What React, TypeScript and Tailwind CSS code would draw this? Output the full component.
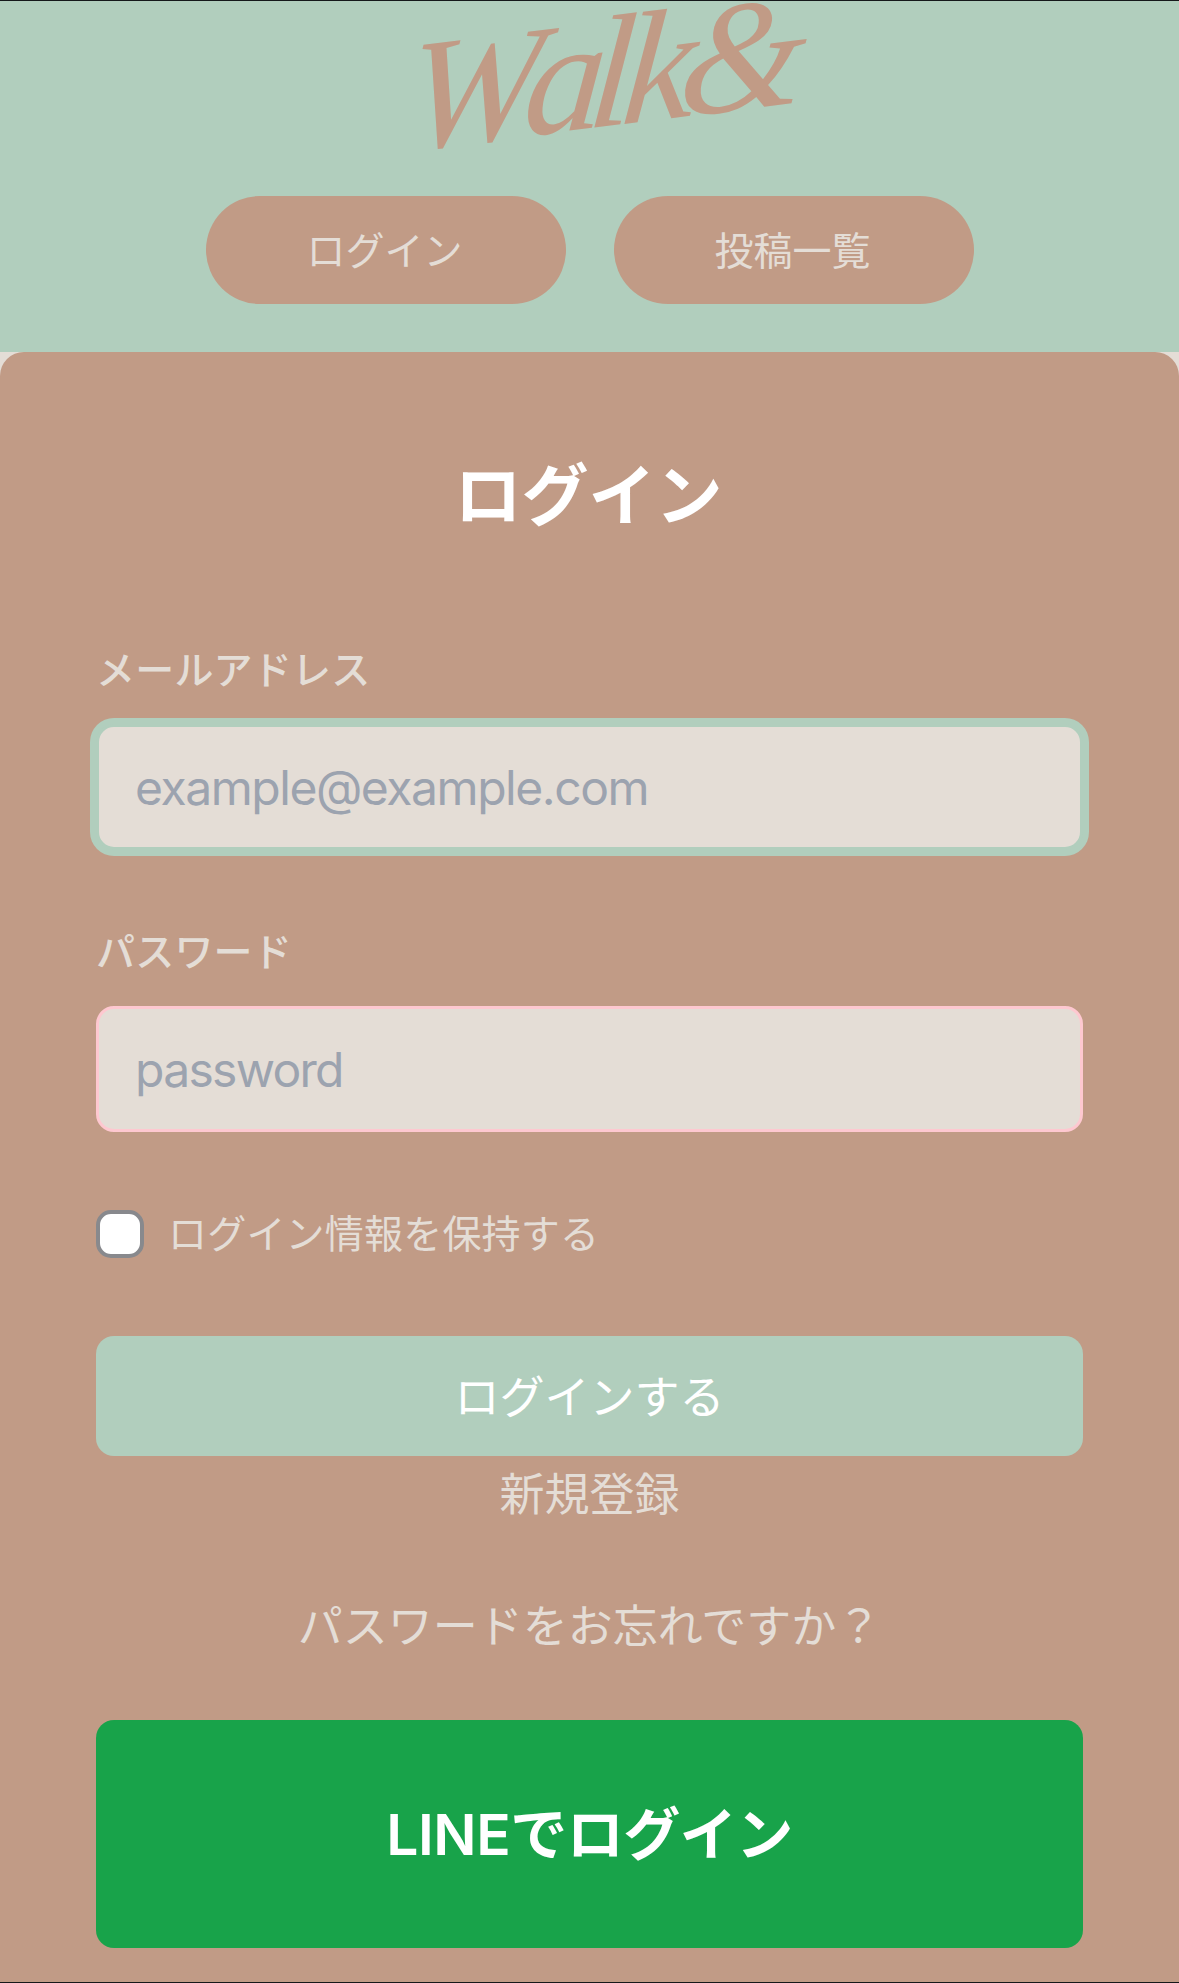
import React from "react";

function Logo() {
  return (
    <svg viewBox="0 0 400 170" className="h-[170px] w-[400px] overflow-visible" role="img" aria-label="Walk&amp;">
      <g
        transform="translate(1 150) rotate(-7) skewX(-12) scale(1.18 1.14)"
        fill="#c19b86"
        fontFamily="'Liberation Serif', serif"
        fontStyle="italic"
        fontSize="138"
      >
        <text x="0 101 156 185 233">Walk&amp;</text>
      </g>
    </svg>
  );
}

function NavButton({ children }: { children: React.ReactNode }) {
  return (
    <button className="h-[108px] w-[360px] rounded-full bg-[#c19b86] pr-0.5 text-[39px] leading-none text-[#e4ddd6]">
      {children}
    </button>
  );
}

export default function App() {
  return (
    <div className="flex h-[1983px] w-[1179px] flex-col border-y border-[#15181a] bg-[#e4ddd6] font-['Inter','Noto_Sans_CJK_JP',sans-serif]">
      <header className="flex h-[351px] shrink-0 flex-col items-center bg-[#b1cebd]">
        <div className="h-[195px] pl-6">
          <Logo />
        </div>
        <nav className="flex gap-12">
          <NavButton>ログイン</NavButton>
          <NavButton>投稿一覧</NavButton>
        </nav>
      </header>

      <main className="flex grow flex-col rounded-t-3xl bg-[#c19b86] px-24 text-[#e4ddd6]">
        <h1 className="mt-[102px] pr-0.5 text-center text-[67px] leading-[84px] font-bold text-white">ログイン</h1>

        <form className="flex flex-col">
          <label htmlFor="email" className="mt-[102px] text-[39px] leading-[60px] font-medium tracking-[0.2px]">メールアドレス</label>
          <input
            id="email"
            type="email"
            placeholder="example@example.com"
            className="mt-6 h-[126px] rounded-[18px] border-[3px] border-[#b1cebd] bg-[#e4ddd6] px-9 text-[48px] tracking-[-1.45px] ring-6 ring-[#b1cebd] outline-none placeholder:text-[#9ca3af]"
          />
          <label htmlFor="password" className="mt-[72px] text-[39px] leading-[60px] font-medium tracking-[0.2px]">パスワード</label>
          <input
            id="password"
            type="password"
            placeholder="password"
            className="mt-6 h-[126px] rounded-[18px] border-[3px] border-[#fec8d0] bg-[#e4ddd6] px-9 text-[48px] tracking-[-1.7px] outline-none placeholder:text-[#9ca3af]"
          />
          <label className="mt-[72px] flex h-[60px] items-center gap-6 text-[39px] leading-[60px] tracking-[0.2px]">
            <input type="checkbox" className="size-12 appearance-none rounded-[15px] border-4 border-[#88898d] bg-white" />
            ログイン情報を保持する
          </label>
          <button type="button" className="mt-[72px] h-[120px] rounded-[18px] bg-[#b1cebd] pt-0.5 text-[45px] leading-none text-white">
            ログインする
          </button>
        </form>

        <a className="mt-1.5 text-center text-[45px] leading-[66px]">新規登録</a>
        <a className="mt-[66px] text-center text-[45px] leading-[66px]">パスワードをお忘れですか？</a>

        <button className="mt-[60px] h-[228px] shrink-0 rounded-[18px] bg-[#18a34a] text-[57px] leading-none font-semibold tracking-[-0.5px] text-white">
          LINEでログイン
        </button>
      </main>
    </div>
  );
}
